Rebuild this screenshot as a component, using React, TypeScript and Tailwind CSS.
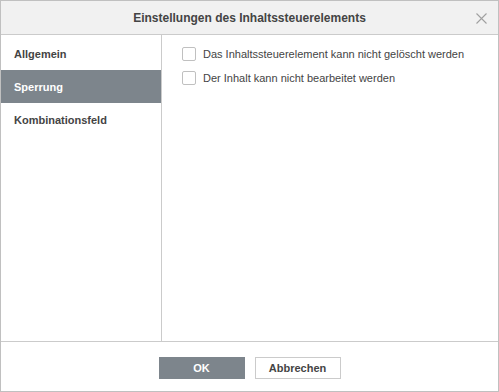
export default function App() {
  const font = { fontFamily: '"Liberation Sans", Arial, sans-serif' };
  return (
    <div style={font} className="w-[499px] h-[392px] border border-[#c0c0c0] bg-white flex flex-col text-[#444]">
      <div className="h-[34px] shrink-0 bg-[#f1f1f1] border-b border-[#cbcbcb] relative flex items-center justify-center">
        <span className="text-[12px] font-bold text-[#444]">Einstellungen des Inhaltssteuerelements</span>
        <svg className="absolute left-[475px] top-[12px]" width="11" height="11" viewBox="0 0 11 11">
          <path d="M0.5 0.5 L10.5 10.5 M10.5 0.5 L0.5 10.5" stroke="#a0a0a0" strokeWidth="1.1" fill="none" />
        </svg>
      </div>
      <div className="h-[307px] shrink-0 border-b border-[#cbcbcb] flex">
        <div className="w-[161px] shrink-0 border-r border-[#cbcbcb] pt-[2px] flex flex-col">
          <div className="h-[33px] flex items-center pl-[13px] pt-[1px] text-[11px] font-bold text-[#444]">Allgemein</div>
          <div className="h-[33px] flex items-center pl-[13px] pt-[1px] text-[11px] font-bold text-white bg-[#7d858c]">Sperrung</div>
          <div className="h-[33px] flex items-center pl-[13px] pt-[1px] text-[11px] font-bold text-[#444]">Kombinationsfeld</div>
        </div>
        <div className="flex-1 pl-[20px] pt-[12px] flex flex-col gap-[10px]">
          <label className="flex items-center gap-[7px] h-[14px]">
            <span className="w-[14px] h-[14px] border border-[#c0c0c0] rounded-[2px] bg-white" />
            <span className="text-[11px] text-[#444]">Das Inhaltssteuerelement kann nicht gelöscht werden</span>
          </label>
          <label className="flex items-center gap-[7px] h-[14px]">
            <span className="w-[14px] h-[14px] border border-[#c0c0c0] rounded-[2px] bg-white" />
            <span className="text-[11px] text-[#444]">Der Inhalt kann nicht bearbeitet werden</span>
          </label>
        </div>
      </div>
      <div className="flex-1 flex justify-center items-start pt-[15px] gap-[10px]">
        <button className="w-[86px] h-[22px] bg-[#7d858c] text-white text-[11px] font-bold">OK</button>
        <button className="w-[86px] h-[22px] bg-white border border-[#cbcbcb] text-[#444] text-[11px] font-bold">Abbrechen</button>
      </div>
    </div>
  );
}
